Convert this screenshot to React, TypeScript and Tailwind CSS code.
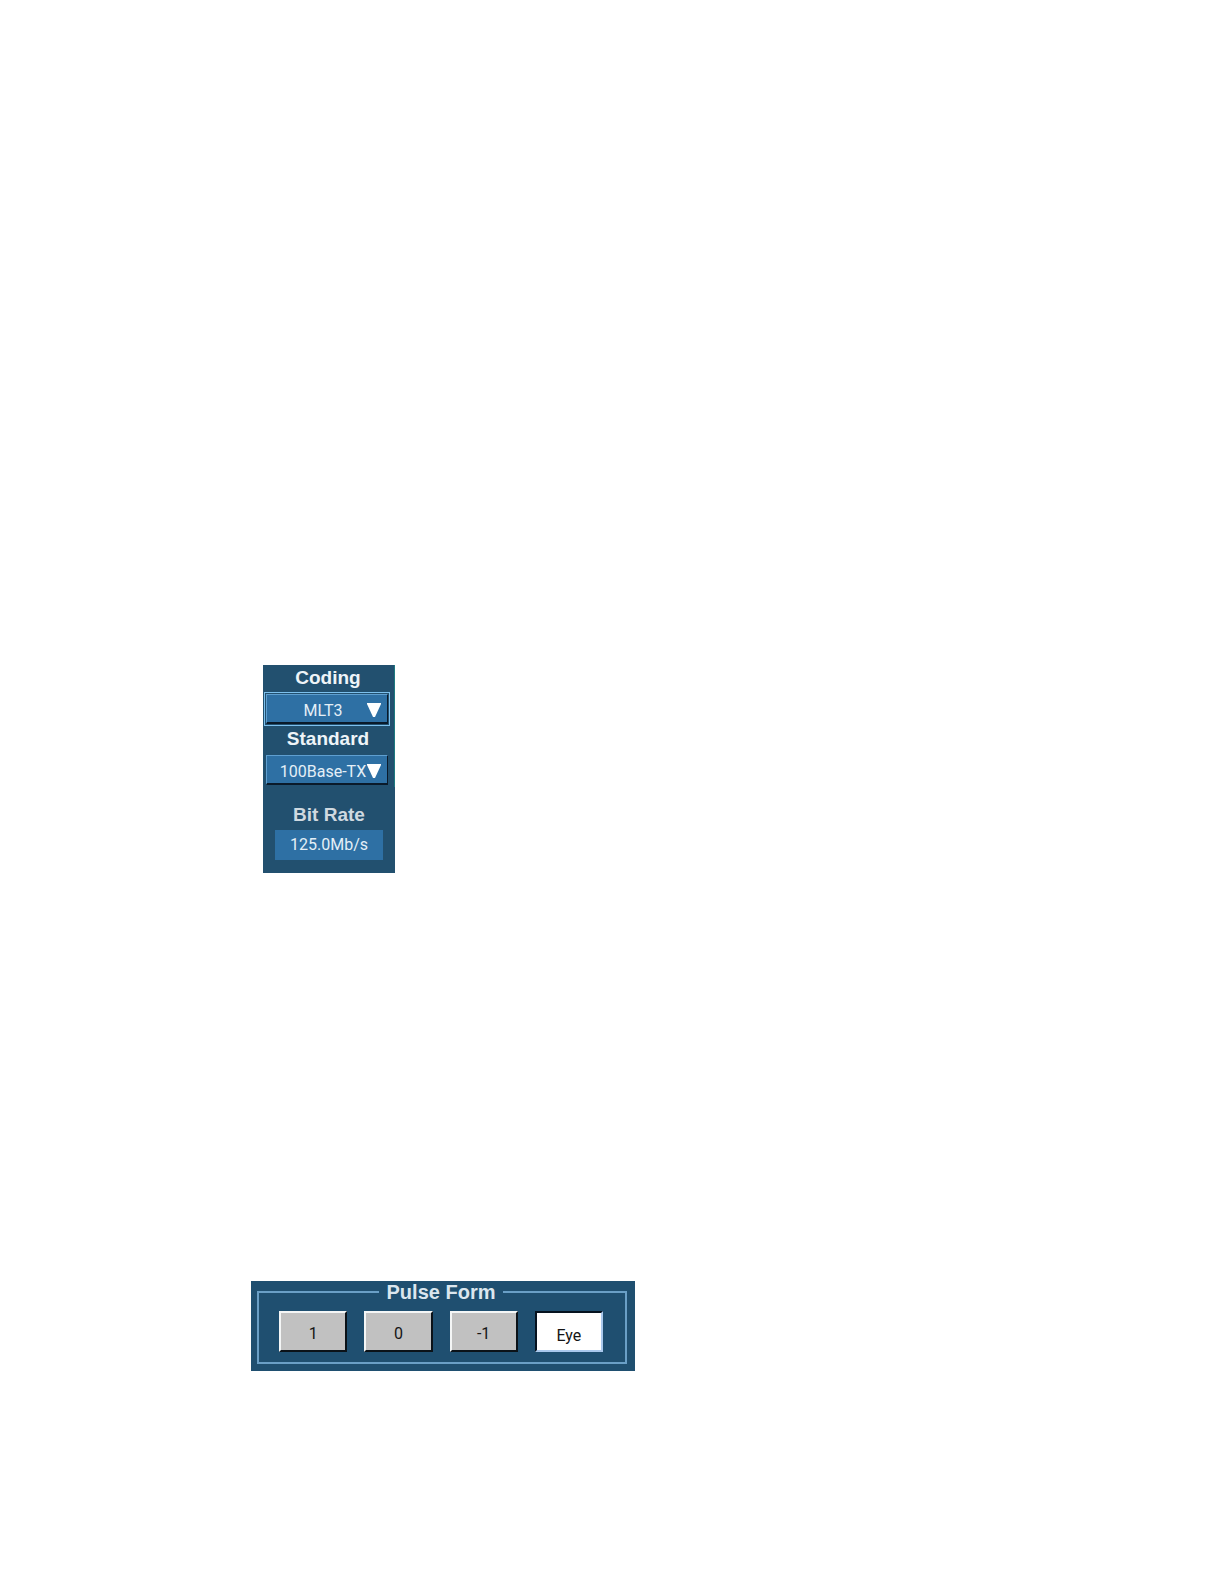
import { useState } from "react";
import clsx from "clsx";

const codings = ["MLT3", "NRZ", "AMI"];
const standards = ["100Base-TX", "FDDI"];
const pulseForms = ["1", "0", "-1", "Eye"];

type DropdownProps = {
  id: string;
  label: string;
  options: string[];
  focused?: boolean;
};

function Dropdown({ id, label, options, focused }: DropdownProps) {
  return (
    <div>
      <label htmlFor={id} className="block pb-0.5 pl-0.5 text-center text-[19px] leading-[25px] font-bold text-[#eef4f8]">
        {label}
      </label>
      <div className={clsx("relative border p-px", focused ? "border-[#7cc0ee]" : "border-transparent")}>
        <select
          id={id}
          className="block h-[30px] w-full appearance-none border border-t-[#5f9fd0] border-r-[#0a1a2a] border-b-2 border-b-[#0a1a2a] border-l-[#5f9fd0] bg-[#2e70a4] pt-1 pr-2 text-center font-[Roboto,'Liberation_Sans',sans-serif] text-base leading-6 text-[#e4eff7] outline-none [text-align-last:center]"
        >
          {options.map((option) => (
            <option key={option}>{option}</option>
          ))}
        </select>
        <svg viewBox="0 0 14 14" className="pointer-events-none absolute top-2.5 right-2 h-3.5 w-3.5" aria-hidden="true">
          <path d="M0 0h14v1L8 14H6L0 1Z" fill="#fff" />
        </svg>
      </div>
    </div>
  );
}

function CodingPanel() {
  return (
    <section className="ml-3 flex w-[132px] flex-col bg-[#22506f] pb-[13px]">
      <div className="border-r border-[#1d7a80] pr-1 pl-px">
        <Dropdown id="coding" label="Coding" options={codings} focused />
        <Dropdown id="standard" label="Standard" options={standards} />
      </div>
      <h2 className="mt-3 text-center text-[19px] leading-[31px] font-bold text-[#cfd9e0]">Bit Rate</h2>
      <output className="mx-3 block bg-[#2e70a4] text-center font-[Roboto,'Liberation_Sans',sans-serif] text-base leading-[30px] text-[#e4eff7]">
        125.0Mb/s
      </output>
    </section>
  );
}

function PulseFormPanel() {
  const [active, setActive] = useState("Eye");

  return (
    <section className="w-96 bg-[#1f4f70] pt-px pr-2 pb-[7px] pl-1.5">
      <fieldset className="border-2 border-[#6a9fc6] pt-[9px] pr-[22px] pb-2.5 pl-5">
        <legend className="mx-auto px-2 text-xl leading-5 font-bold text-[#dbe6ee]">Pulse Form</legend>
        <div className="flex gap-[17px]">
          {pulseForms.map((form) => (
            <button
              key={form}
              type="button"
              aria-pressed={active === form}
              onClick={() => setActive(form)}
              className={clsx(
                "h-[41px] flex-1 border-2 font-[Roboto,'Liberation_Sans',sans-serif] text-base text-[#151515]",
                active === form
                  ? "border-t-[#06121f] border-r-[#a9c8ec] border-b-[#a9c8ec] border-l-[#06121f] bg-white pt-2"
                  : "border-t-[#f4f6f6] border-r-[#0b1218] border-b-[#0b1218] border-l-[#f4f6f6] bg-[#c1c1c1] pt-1",
              )}
            >
              {form}
            </button>
          ))}
        </div>
      </fieldset>
    </section>
  );
}

export default function App() {
  return (
    <main className="flex min-h-screen flex-col items-start gap-[408px] bg-white pt-[665px] pl-[251px] font-['Liberation_Sans',Arial,sans-serif]">
      <CodingPanel />
      <PulseFormPanel />
    </main>
  );
}
